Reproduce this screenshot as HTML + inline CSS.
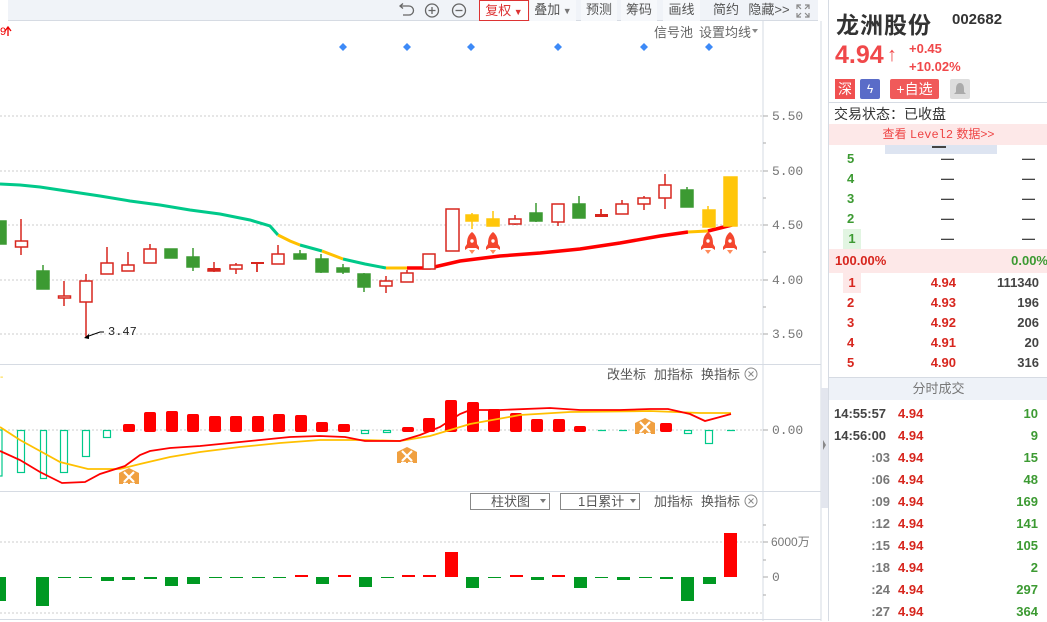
<!DOCTYPE html>
<html><head><meta charset="utf-8"><style>
*{margin:0;padding:0;box-sizing:border-box}
body{width:1047px;height:621px;overflow:hidden;background:#fff;font-family:"Liberation Sans","Noto Sans CJK SC",sans-serif;position:relative}
.abs{position:absolute}
.tb{position:absolute;left:8px;top:0;width:810px;height:21px;background:#f0f3f8;border-bottom:1px solid #d6dbe3}
.btn{position:absolute;top:0;height:21px;line-height:20px;font-size:13px;color:#555;text-align:center;background:#f6f8fb}
.rp{position:absolute;left:828px;top:0;width:219px;height:621px;border-left:1px solid #d6dbe3;font-size:13px}
.row{position:absolute;left:0;width:219px;height:20px;line-height:20px;font-weight:bold;font-size:13px}
.row span{position:absolute}
.g{color:#3c9a32}.r{color:#d7261e}.d{color:#444}
</style></head><body>
<div class="tb">
<svg class="abs" style="left:389px;top:2px" width="80" height="17" viewBox="0 0 80 17" fill="none" stroke="#666" stroke-width="1.3">
<path d="M4 4h8a4.5 4.5 0 0 1 0 9H6"/><path d="M6 1.5L3 4l3 2.5"/>
<circle cx="35" cy="8.5" r="6.5"/><path d="M31.5 8.5h7M35 5v7"/>
<circle cx="62" cy="8.5" r="6.5"/><path d="M58.5 8.5h7"/>
</svg>
<div class="btn" style="left:471px;width:50px;border:1px solid #d33;background:#fff;color:#d33">复权<span style="font-size:9px"> ▼</span></div>
<div class="btn" style="left:522px;width:46px">叠加<span style="font-size:9px;color:#777"> ▼</span></div>
<div class="btn" style="left:573px;width:36px">预测</div>
<div class="btn" style="left:613px;width:36px">筹码</div>
<div class="btn" style="left:655px;width:37px">画线</div>
<div class="btn" style="left:700px;width:36px;background:none">简约</div>
<div class="btn" style="left:738px;width:46px;background:none">隐藏>></div>
<svg class="abs" style="left:788px;top:4px" width="14" height="14" fill="none" stroke="#888" stroke-width="1.2"><path d="M1 5V1h4M1 1l4 4M9 1h4v4M13 1L9 5M1 9v4h4M1 13l4-4M13 9v4H9M13 13L9 9"/></svg>
</div>
<div class="abs" style="left:0;top:0;width:8px;height:21px;background:#fff"></div>

<svg class="abs" style="left:0;top:0" width="828" height="621">
<g stroke="#ccc" stroke-dasharray="2,2" stroke-width="1">
<path d="M0 116H763M0 171H763M0 225H763M0 280H763M0 334H763M0 430H763M0 542H763M0 613H763"/>
</g>
<path d="M763 21V621M821 21V621" stroke="#d6dbe3"/>
<path d="M0 364.5H821M0 491.5H821M0 619.5H821" stroke="#d6dbe3"/>
<g stroke="#aaa"><path d="M763 116h5M763 171h5M763 225h5M763 280h5M763 334h5M763 143h3M763 198h3M763 252h3M763 307h3M763 430h5M763 542h5M763 577h5M763 525h3M763 560h3M763 595h3"/></g>
<rect x="821" y="388" width="7" height="120" fill="#e3e6ee"/>
<path d="M823 440l3 5-3 5z" fill="#888"/>
<g font-family="Liberation Mono,monospace" font-size="13" fill="#777">
<text x="772" y="120">5.50</text><text x="772" y="175">5.00</text><text x="772" y="229">4.50</text><text x="772" y="284">4.00</text><text x="772" y="338">3.50</text><text x="772" y="434">0.00</text><text x="772" y="581">0</text>
</g>
<text x="771" y="546" font-size="12" fill="#777">6000万</text>
<text x="0" y="35" font-size="11" fill="#e00">9</text><path d="M8 36V28M5 31l3-4 3 4" stroke="#e00" stroke-width="1.3" fill="none"/>
<g fill="#3d8af7"><path d="M343 43l4 4-4 4-4-4zM407 43l4 4-4 4-4-4zM471 43l4 4-4 4-4-4zM558 43l4 4-4 4-4-4zM644 43l4 4-4 4-4-4zM709 43l4 4-4 4-4-4z"/></g>
<text x="654" y="37" font-size="13" fill="#666">信号池</text><text x="699" y="37" font-size="13" fill="#666">设置均线</text><path d="M752 29h6l-3 4z" fill="#888"/>
<polyline fill="none" stroke="#00c98a" stroke-width="3" points="0,184 20,185 40,187 60,190 80,193 100,196 130,201 160,205 190,210 220,214 250,220 270,226 278,235"/>
<polyline fill="none" stroke="#ffc000" stroke-width="3" points="278,235 290,241 300,245"/>
<polyline fill="none" stroke="#00c98a" stroke-width="3" points="300,245 322,251"/>
<polyline fill="none" stroke="#ffc000" stroke-width="3" points="322,251 343,259"/>
<polyline fill="none" stroke="#00c98a" stroke-width="3" points="343,259 365,264 386,268"/>
<polyline fill="none" stroke="#ffc000" stroke-width="3" points="386,268 407,268"/>
<polyline fill="none" stroke="#ff0000" stroke-width="3.5" points="407,268 430,268 460,261 500,256 540,253 580,249 620,243 660,236 688,232"/>
<polyline fill="none" stroke="#ffc000" stroke-width="3" points="688,232 708,231"/>
<polyline fill="none" stroke="#ff0000" stroke-width="3.5" points="708,231 732,225"/>
<g stroke="#d7261e" stroke-width="1.5" fill="#fff">
<path d="M21 219v36M64 281v25M86 274v63M107 247v16M128 252v13M150 244v5M236 263v11M257 262v10M278 245v9M386 276v17M407 270v3M450 209v42M515 215v10M558 222v4M601 209v6M622 200v4M644 196v14M665 174v35"/>
<rect x="15.5" y="241" width="12" height="6"/><rect x="58.5" y="296" width="12" height="2"/><rect x="80" y="281" width="12" height="21"/>
<rect x="101" y="263" width="12" height="11"/><rect x="122" y="265" width="12" height="6"/><rect x="144" y="249" width="12" height="14"/>
<rect x="208" y="269" width="12" height="2"/><rect x="230" y="265" width="12" height="4"/><rect x="272" y="254" width="12" height="10"/>
<rect x="380" y="281" width="12" height="5"/><rect x="401" y="273" width="12" height="9"/><rect x="423" y="254" width="12" height="15"/>
<rect x="446" y="209" width="13" height="42"/><rect x="509" y="219" width="12" height="5"/><rect x="552" y="204" width="12" height="18"/>
<rect x="616" y="204" width="12" height="10"/><rect x="638" y="198" width="12" height="6"/><rect x="659" y="185" width="12" height="13"/>
</g>
<g fill="#d7261e"><rect x="208" y="268" width="12" height="3"/><rect x="251" y="262" width="13" height="2"/><rect x="595" y="214" width="13" height="3"/><path d="M214 262v10M257 262v10M601 209v5" stroke="#d7261e" stroke-width="1.5"/></g>
<g fill="#3c9a32" stroke="#3c9a32" stroke-width="1.5">
<path d="M43 265v24M193 248v23M300 250v9M321 254v19M343 264v10M364 273v19M536 203v19M579 196v8M687 187v20"/>
<rect x="0" y="221" width="6" height="23"/><rect x="37" y="271" width="12" height="18"/><rect x="165" y="249" width="12" height="9"/>
<rect x="187" y="257" width="12" height="10"/><rect x="294" y="254" width="12" height="5"/><rect x="316" y="259" width="12" height="13"/>
<rect x="337" y="268" width="12" height="4"/><rect x="358" y="274" width="12" height="13"/><rect x="530" y="213" width="12" height="8"/>
<rect x="573" y="204" width="12" height="14"/><rect x="681" y="190" width="12" height="17"/>
</g>
<g fill="#ffc60a" stroke="#ffc60a" stroke-width="1.5">
<path d="M472 213v16M493 211v15M708 206v4"/>
<rect x="466" y="215" width="12" height="6"/><rect x="487" y="219" width="12" height="7"/><rect x="703" y="210" width="12" height="17"/><rect x="724" y="177" width="13" height="49"/>
</g>
<g id="rk"><path d="M472 232c4 3 5 7 5 12l2 3v3l-3-2h-8l-3 2v-3l2-3c0-5 1-9 5-12z" fill="#f4462e"/><circle cx="472" cy="241" r="1.7" fill="#fff"/><path d="M469 250h6l-3 4z" fill="#ff8a5a"/></g>
<use href="#rk" x="21"/><use href="#rk" x="236"/><use href="#rk" x="258"/>
<path d="M86 337l14-5 4 0" stroke="#000" fill="none"/><path d="M84 338l5-4 0 5z" fill="#000"/>
<text x="108" y="335" font-family="Liberation Mono,monospace" font-size="12" fill="#222">3.47</text>
<g fill="none" stroke="#00c98a" stroke-width="1.2">
<rect x="-1" y="430" width="3" height="46"/><rect x="17.5" y="430.5" width="7" height="42"/><rect x="40.5" y="430.5" width="6" height="48"/><rect x="60.5" y="430.5" width="7" height="42"/><rect x="82.5" y="430.5" width="7" height="26"/><rect x="103.5" y="430.5" width="7" height="7"/>
<rect x="361.5" y="430.5" width="7" height="3"/><rect x="383.5" y="430.5" width="7" height="2"/><rect x="684.5" y="430.5" width="7" height="3"/><rect x="705.5" y="430.5" width="7" height="13"/>
<path d="M598 430.5h8M619 430.5h8M727 430.5h8"/>
</g>
<g fill="#ff0000">
<rect x="123" y="424" width="12" height="8" rx="2"/><rect x="144" y="412" width="12" height="20" rx="2"/><rect x="166" y="411" width="12" height="21" rx="2"/><rect x="187" y="414" width="12" height="18" rx="2"/><rect x="209" y="416" width="12" height="16" rx="2"/><rect x="230" y="416" width="12" height="16" rx="2"/><rect x="252" y="416" width="12" height="16" rx="2"/><rect x="273" y="414" width="12" height="18" rx="2"/><rect x="295" y="415" width="12" height="17" rx="2"/><rect x="316" y="422" width="12" height="10" rx="2"/><rect x="338" y="424" width="12" height="8" rx="2"/><rect x="402" y="427" width="12" height="5" rx="2"/>
<rect x="423" y="418" width="12" height="14" rx="2"/><rect x="445" y="400" width="12" height="32" rx="2"/><rect x="467" y="402" width="12" height="30" rx="2"/><rect x="488" y="409" width="12" height="23" rx="2"/><rect x="510" y="413" width="12" height="19" rx="2"/><rect x="531" y="419" width="12" height="13" rx="2"/><rect x="553" y="419" width="12" height="13" rx="2"/><rect x="574" y="426" width="12" height="6" rx="2"/><rect x="660" y="423" width="12" height="9" rx="2"/>
</g>
<polyline fill="none" stroke="#ffc000" stroke-width="1.8" points="0,427 20,440 40,451 60,462 88,469 120,469 140,464 170,457 200,452 240,447 280,443 320,440 365,440 400,441 430,436 470,424 520,415 570,412 650,411 700,413 731,413"/>
<polyline fill="none" stroke="#ff0000" stroke-width="1.8" points="0,451 20,460 40,472 62,483 85,482 100,474 125,466 140,455 150,451 170,448 200,446 230,443 260,440 290,437 320,436 345,437 365,441 400,441 420,435 440,427 460,414 470,410 500,410 550,408 580,410 620,410 650,409 668,409 690,414 705,421 720,417 731,414"/>
<g id="xi"><path d="M129 468l10 5v11h-20v-11z" fill="#f0a040"/><path d="M124 472l10 10M134 472l-10 10M123 484h5M130 484h5" stroke="#fff" stroke-width="2.2" fill="none"/></g>
<use href="#xi" x="278" y="-21"/><use href="#xi" x="516" y="-50"/>
<text x="607" y="379" font-size="13" fill="#555">改坐标</text><text x="654" y="379" font-size="13" fill="#555">加指标</text><text x="701" y="379" font-size="13" fill="#555">换指标</text>
<circle cx="751" cy="374" r="6" fill="none" stroke="#888"/><path d="M748.5 371.5l5 5M753.5 371.5l-5 5" stroke="#888"/>
<text x="0" y="380" font-size="10" fill="#fc0">-</text>
<rect x="470.5" y="493.5" width="79" height="16" fill="#fff" stroke="#888"/><text x="491" y="506" font-size="13" fill="#555">柱状图</text><path d="M540 499h6l-3 4z" fill="#777"/>
<rect x="560.5" y="493.5" width="79" height="16" fill="#fff" stroke="#888"/><text x="578" y="506" font-size="13" fill="#555">1日累计</text><path d="M630 499h6l-3 4z" fill="#777"/>
<text x="654" y="506" font-size="13" fill="#555">加指标</text><text x="701" y="506" font-size="13" fill="#555">换指标</text>
<circle cx="751" cy="501" r="6" fill="none" stroke="#888"/><path d="M748.5 498.5l5 5M753.5 498.5l-5 5" stroke="#888"/>
<g fill="#009922">
<rect x="0" y="577" width="6" height="24"/><rect x="36" y="577" width="13" height="29"/><rect x="58" y="577" width="13" height="1"/><rect x="79" y="577" width="13" height="1"/><rect x="101" y="577" width="13" height="4"/><rect x="122" y="577" width="13" height="3"/><rect x="144" y="577" width="13" height="2"/><rect x="165" y="577" width="13" height="9"/><rect x="187" y="577" width="13" height="7"/><rect x="209" y="577" width="13" height="1"/><rect x="230" y="577" width="13" height="1"/><rect x="252" y="577" width="13" height="1"/><rect x="273" y="577" width="13" height="1"/><rect x="316" y="577" width="13" height="7"/><rect x="359" y="577" width="13" height="10"/><rect x="381" y="577" width="13" height="1"/><rect x="466" y="577" width="13" height="11"/><rect x="488" y="577" width="13" height="1"/><rect x="531" y="577" width="13" height="3"/><rect x="574" y="577" width="13" height="11"/><rect x="595" y="577" width="13" height="1"/><rect x="617" y="577" width="13" height="3"/><rect x="639" y="577" width="13" height="1"/><rect x="660" y="577" width="13" height="2"/><rect x="681" y="577" width="13" height="24"/><rect x="703" y="577" width="13" height="7"/>
</g>
<g fill="#ff0000">
<rect x="295" y="575" width="13" height="2"/><rect x="338" y="575" width="13" height="2"/><rect x="402" y="575" width="13" height="2"/><rect x="423" y="575" width="13" height="2"/><rect x="445" y="552" width="13" height="25"/><rect x="510" y="575" width="13" height="2"/><rect x="552" y="575" width="13" height="2"/><rect x="724" y="533" width="13" height="44"/>
</g>
</svg>

<div class="rp">
<div class="abs" style="left:7px;top:6px;font-size:23px;font-weight:bold;color:#333;letter-spacing:1px">龙洲股份</div>
<div class="abs" style="left:123px;top:11px;font-size:15px;font-weight:bold;color:#333">002682</div>
<div class="abs" style="left:6px;top:41px;font-size:25px;font-weight:bold;color:#f0484a">4.94</div>
<div class="abs" style="left:58px;top:44px;font-size:20px;font-weight:bold;color:#f0484a">↑</div>
<div class="abs" style="left:80px;top:40px;font-size:13px;font-weight:bold;color:#f0484a;line-height:18px">+0.45<br>+10.02%</div>
<div class="abs" style="left:6px;top:79px;width:20px;height:20px;background:#f05050;color:#fff;font-size:14px;text-align:center;line-height:20px">深</div>
<div class="abs" style="left:31px;top:79px;width:20px;height:20px;background:#5a6cc8;color:#fff;font-size:12px;text-align:center;line-height:20px;border-radius:2px">ϟ</div>
<div class="abs" style="left:61px;top:79px;width:49px;height:20px;background:#f05a5a;color:#fff;font-size:14px;text-align:center;line-height:20px;border-radius:2px">+自选</div>
<div class="abs" style="left:121px;top:79px;width:20px;height:20px;background:#ddd;border-radius:2px"><svg width="20" height="20"><path d="M10 4c3 0 4 3 4 6v3l2 2H4l2-2v-3c0-3 1-6 4-6z" fill="#aaa"/></svg></div>
<div class="abs" style="left:0;top:102px;width:219px;border-top:1px solid #d6dbe3"></div>
<div class="abs" style="left:5px;top:104px;font-size:14px;color:#333">交易状态：已收盘</div>
<div class="abs" style="left:0;top:124px;width:219px;height:21px;background:#fde8e8;color:#e44;font-size:12px;text-align:center;line-height:21px">查看 <span style="font-family:Liberation Mono,monospace">Level2</span> 数据>></div>
<div class="abs" style="left:56px;top:145px;width:112px;height:9px;background:#dde4f1"></div>
<div class="abs" style="left:103px;top:146px;width:14px;height:2px;background:#444"></div>
<div class="row" style="top:149px"><span class="g" style="left:18px">5</span><span class="d" style="left:112px">—</span><span class="d" style="left:193px">—</span></div>
<div class="row" style="top:169px"><span class="g" style="left:18px">4</span><span class="d" style="left:112px">—</span><span class="d" style="left:193px">—</span></div>
<div class="row" style="top:189px"><span class="g" style="left:18px">3</span><span class="d" style="left:112px">—</span><span class="d" style="left:193px">—</span></div>
<div class="row" style="top:209px"><span class="g" style="left:18px">2</span><span class="d" style="left:112px">—</span><span class="d" style="left:193px">—</span></div>
<div class="row" style="top:229px"><span class="g" style="left:14px;width:18px;background:#e2f5e2;text-align:center">1</span><span class="d" style="left:112px">—</span><span class="d" style="left:193px">—</span></div>
<div class="row" style="top:249px;height:24px;line-height:24px;background:#fde8e8"><span class="r" style="left:6px">100.00%</span><span class="g" style="right:0">0.00%</span></div>
<div class="row" style="top:273px"><span class="r" style="left:14px;width:18px;background:#fde8e8;text-align:center">1</span><span class="r" style="right:92px">4.94</span><span class="d" style="right:9px">111340</span></div>
<div class="row" style="top:293px"><span class="r" style="left:18px">2</span><span class="r" style="right:92px">4.93</span><span class="d" style="right:9px">196</span></div>
<div class="row" style="top:313px"><span class="r" style="left:18px">3</span><span class="r" style="right:92px">4.92</span><span class="d" style="right:9px">206</span></div>
<div class="row" style="top:333px"><span class="r" style="left:18px">4</span><span class="r" style="right:92px">4.91</span><span class="d" style="right:9px">20</span></div>
<div class="row" style="top:353px"><span class="r" style="left:18px">5</span><span class="r" style="right:92px">4.90</span><span class="d" style="right:9px">316</span></div>
<div class="abs" style="left:0;top:377px;width:219px;height:23px;background:#eef2f8;border-top:1px solid #d6dbe3;color:#777;font-size:13px;text-align:center;line-height:22px">分时成交</div>
<div class="row" style="top:404px"><span class="d" style="left:5px">14:55:57</span><span class="r" style="left:69px">4.94</span><span class="g" style="right:10px">10</span></div>
<div class="row" style="top:426px"><span class="d" style="left:5px">14:56:00</span><span class="r" style="left:69px">4.94</span><span class="g" style="right:10px">9</span></div>
<div class="row" style="top:448px"><span style="color:#777;right:158px">:03</span><span class="r" style="left:69px">4.94</span><span class="g" style="right:10px">15</span></div>
<div class="row" style="top:470px"><span style="color:#777;right:158px">:06</span><span class="r" style="left:69px">4.94</span><span class="g" style="right:10px">48</span></div>
<div class="row" style="top:492px"><span style="color:#777;right:158px">:09</span><span class="r" style="left:69px">4.94</span><span class="g" style="right:10px">169</span></div>
<div class="row" style="top:514px"><span style="color:#777;right:158px">:12</span><span class="r" style="left:69px">4.94</span><span class="g" style="right:10px">141</span></div>
<div class="row" style="top:536px"><span style="color:#777;right:158px">:15</span><span class="r" style="left:69px">4.94</span><span class="g" style="right:10px">105</span></div>
<div class="row" style="top:558px"><span style="color:#777;right:158px">:18</span><span class="r" style="left:69px">4.94</span><span class="g" style="right:10px">2</span></div>
<div class="row" style="top:580px"><span style="color:#777;right:158px">:24</span><span class="r" style="left:69px">4.94</span><span class="g" style="right:10px">297</span></div>
<div class="row" style="top:602px"><span style="color:#777;right:158px">:27</span><span class="r" style="left:69px">4.94</span><span class="g" style="right:10px">364</span></div>
</div>
</body></html>
